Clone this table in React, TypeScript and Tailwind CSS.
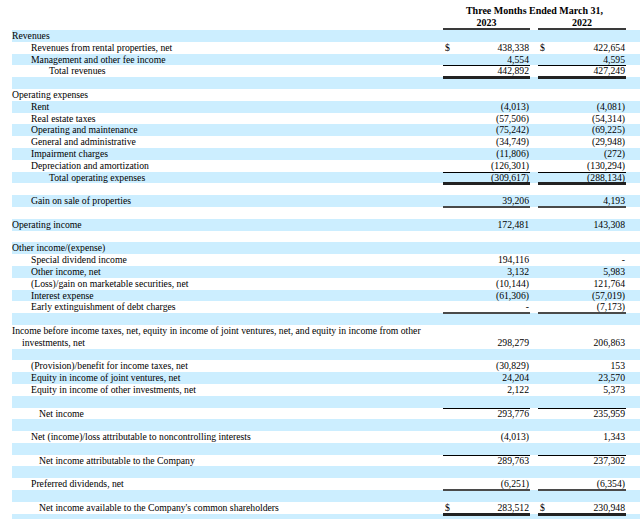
import React from 'react';

type Line = 'thin' | 'thick' | 'double';

interface Row {
  label?: string;
  label2?: string;
  indent?: number;
  a?: string;
  b?: string;
  dollar?: boolean;
  line?: Line;
  ruleAbove?: boolean;
}

const rows: Row[] = [
  { label: 'Revenues', indent: 0 },
  { label: 'Revenues from rental properties, net', indent: 1, a: '438,338', b: '422,654', dollar: true },
  { label: 'Management and other fee income', indent: 1, a: '4,554', b: '4,595', line: 'thin' },
  { label: 'Total revenues', indent: 2, a: '442,892', b: '427,249', line: 'double' },
  {},
  { label: 'Operating expenses', indent: 0 },
  { label: 'Rent', indent: 1, a: '(4,013)', b: '(4,081)' },
  { label: 'Real estate taxes', indent: 1, a: '(57,506)', b: '(54,314)' },
  { label: 'Operating and maintenance', indent: 1, a: '(75,242)', b: '(69,225)' },
  { label: 'General and administrative', indent: 1, a: '(34,749)', b: '(29,948)' },
  { label: 'Impairment charges', indent: 1, a: '(11,806)', b: '(272)' },
  { label: 'Depreciation and amortization', indent: 1, a: '(126,301)', b: '(130,294)', line: 'thin' },
  { label: 'Total operating expenses', indent: 2, a: '(309,617)', b: '(288,134)', line: 'double' },
  {},
  { label: 'Gain on sale of properties', indent: 1, a: '39,206', b: '4,193', line: 'thick' },
  {},
  { label: 'Operating income', indent: 0, a: '172,481', b: '143,308' },
  {},
  { label: 'Other income/(expense)', indent: 0 },
  { label: 'Special dividend income', indent: 1, a: '194,116', b: '-' },
  { label: 'Other income, net', indent: 1, a: '3,132', b: '5,983' },
  { label: '(Loss)/gain on marketable securities, net', indent: 1, a: '(10,144)', b: '121,764' },
  { label: 'Interest expense', indent: 1, a: '(61,306)', b: '(57,019)' },
  { label: 'Early extinguishment of debt charges', indent: 1, a: '-', b: '(7,173)', line: 'thick' },
  {},
  {
    label: 'Income before income taxes, net, equity in income of joint ventures, net, and equity in income from other',
    label2: 'investments, net',
    indent: 0,
    a: '298,279',
    b: '206,863',
  },
  {},
  { label: '(Provision)/benefit for income taxes, net', indent: 1, a: '(30,829)', b: '153' },
  { label: 'Equity in income of joint ventures, net', indent: 1, a: '24,204', b: '23,570' },
  { label: 'Equity in income of other investments, net', indent: 1, a: '2,122', b: '5,373' },
  {},
  { label: 'Net income', indent: 3, a: '293,776', b: '235,959', ruleAbove: true },
  {},
  { label: 'Net (income)/loss attributable to noncontrolling interests', indent: 1, a: '(4,013)', b: '1,343' },
  {},
  { label: 'Net income attributable to the Company', indent: 3, a: '289,763', b: '237,302', ruleAbove: true },
  {},
  { label: 'Preferred dividends, net', indent: 1, a: '(6,251)', b: '(6,354)', line: 'thick' },
  {},
  { label: "Net income available to the Company's common shareholders", indent: 3, a: '283,512', b: '230,948', dollar: true, line: 'double' },
  {},
];

const indentClass = ['pl-0', 'pl-[19px]', 'pl-[37px]', 'pl-[27px]'];

// rules are shadows so they never push the figures around; they sit on the row edge
const lineClass = (line?: Line, above?: boolean) => {
  if (above) return 'shadow-[inset_0_1px_0_#000]';
  if (line === 'thin') return 'shadow-[0_1px_0_#000]';
  if (line === 'thick') return 'shadow-[0_1px_0_#4a4a4a,inset_0_-1px_0_#4a4a4a]';
  if (line === 'double') return 'shadow-[0_2px_0_#222,inset_0_-1px_0_#222]';
  return '';
};

const ValueCell = ({ value, row, w }: { value?: string; row: Row; w: string }) => (
  <div className={`${w} h-full flex justify-between relative z-[1] ${lineClass(row.line, row.ruleAbove)}`}>
    <span className="pl-[2px]">{row.dollar ? '$' : ''}</span>
    <span className="pr-[1px]">{value}</span>
  </div>
);

const App: React.FC = () => {
  return (
    <div className="w-[640px] h-[519px] overflow-hidden bg-white text-black font-['Liberation_Serif',serif] text-[9.7px] pl-[12px]">
      {/* column heading */}
      <div className="h-[30px] pt-[5px] flex">
        <div className="w-[431px]" />
        <div className="w-[183px] flex flex-col font-bold text-[10px] leading-[12px]">
          <div className="h-[12px] text-center">Three Months Ended March 31,</div>
          <div className="h-[12px] flex">
            <div className="w-[87px] text-center relative z-[1] shadow-[0_1px_0_#3a3a3a,inset_0_-1px_0_#3a3a3a]">2023</div>
            <div className="w-[8px]" />
            <div className="w-[88px] text-center relative z-[1] shadow-[0_1px_0_#3a3a3a,inset_0_-1px_0_#3a3a3a]">2022</div>
          </div>
        </div>
      </div>

      {rows.map((r, i) => {
        const tall = !!r.label2;
        return (
          <div
            key={i}
            className={`flex leading-[11.8px] ${tall ? 'h-[23.6px]' : 'h-[11.8px]'} ${i % 2 === 0 ? 'bg-[#cceeff]' : 'bg-white'}`}
          >
            <div className={`w-[431px] ${indentClass[r.indent ?? 0]} whitespace-nowrap`}>
              {r.label && <div>{r.label}</div>}
              {r.label2 && <div className="pl-[10px]">{r.label2}</div>}
            </div>
            <div className="flex h-full items-end">
              <div className="h-[11.8px] flex">
                <ValueCell value={r.a} row={r} w="w-[87px]" />
                <div className="w-[8px]" />
                <ValueCell value={r.b} row={r} w="w-[88px]" />
              </div>
            </div>
          </div>
        );
      })}
    </div>
  );
};

export default App;
